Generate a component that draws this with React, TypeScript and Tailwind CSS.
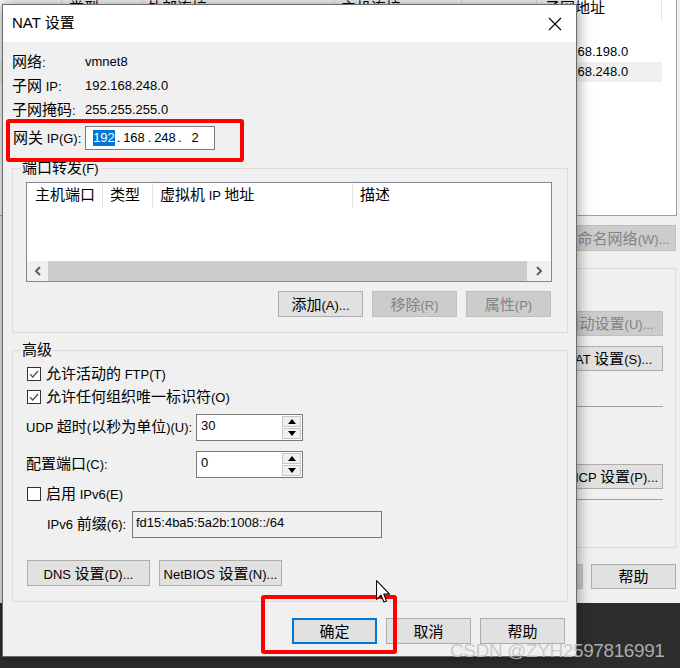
import clsx from "clsx";

const font = "font-['Liberation_Sans','Noto_Sans_CJK_SC',sans-serif]";
const cjk = /([\u2e80-\u9fff\uff00-\uffef]+)/;

// CJK runs are drawn a bit larger than the latin runs, like the Windows UI font does
function T({ s }: Readonly<{ s: string }>) {
  return (
    <span className="whitespace-pre">
      {s.split(cjk).map((p, i) =>
        i % 2 ? (
          <span key={i} className="text-[15px]">
            {p}
          </span>
        ) : (
          p
        ),
      )}
    </span>
  );
}

function Button({
  label,
  className,
  disabled,
  primary,
}: Readonly<{ label: string; className?: string; disabled?: boolean; primary?: boolean }>) {
  return (
    <button
      type="button"
      className={clsx(
        "flex shrink-0 items-center justify-center whitespace-nowrap leading-none",
        disabled
          ? "border border-[#bfbfbf] bg-[#cccccc] text-[#838383]"
          : primary
            ? "border-2 border-[#0078d7] bg-[#e1e1e1]"
            : "border border-[#adadad] bg-[#e1e1e1]",
        className ?? "h-[26px] w-[85px]",
      )}
    >
      <T s={label} />
    </button>
  );
}

function Check({ label, checked }: Readonly<{ label: string; checked?: boolean }>) {
  return (
    <div className="flex h-[20px] items-center">
      <div className="ml-px flex h-[14px] w-[14px] items-center justify-center border border-[#333333] bg-white">
        {checked ? (
          <svg width="12" height="12" viewBox="0 0 12 12">
            <path d="M2 6.2 L4.7 9 L10 3" fill="none" stroke="#4a4a4a" strokeWidth="1.2" />
          </svg>
        ) : null}
      </div>
      <span className="ml-[5px]">
        <T s={label} />
      </span>
    </div>
  );
}

function Tri({ down }: Readonly<{ down?: boolean }>) {
  return (
    <svg width="8" height="5" viewBox="0 0 8 5">
      <polygon points={down ? "0,0 8,0 4,5" : "0,5 8,5 4,0"} fill="#000" />
    </svg>
  );
}

function Spin({ value }: Readonly<{ value: string }>) {
  return (
    <div className="flex h-[27px] w-[107px] border border-[#7a7a7a] bg-white">
      <div className="flex-1 pl-[4px] pt-[3px] leading-[16px]">{value}</div>
      <div className="my-px mr-px flex w-[19px] flex-col gap-px">
        <div className="flex flex-1 items-center justify-center border border-[#c8c8c8] bg-[#f0f0f0]">
          <Tri />
        </div>
        <div className="flex flex-1 items-center justify-center border border-[#c8c8c8] bg-[#f0f0f0]">
          <Tri down />
        </div>
      </div>
    </div>
  );
}

function Chevron({ right }: Readonly<{ right?: boolean }>) {
  return (
    <svg width="8" height="10" viewBox="0 0 8 10">
      <path
        d={right ? "M2 1 L6 5 L2 9" : "M6 1 L2 5 L6 9"}
        fill="none"
        stroke="#606060"
        strokeWidth="2"
      />
    </svg>
  );
}

function BackWindow() {
  return (
    <div className="flex h-[603px] flex-col bg-[#f0f0f0]">
      <div className="h-[216px] w-[677px] shrink-0 border-r border-b border-[#a0a0a0] bg-white">
        <div className="flex h-[22px]">
          <div className="w-[62px] border-r border-[#e5e5e5]" />
          <div className="w-[81px] border-r border-[#e5e5e5] pl-[7px] leading-[16px]">
            <T s="类型" />
          </div>
          <div className="w-[192px] border-r border-[#e5e5e5] pl-[4px] leading-[16px]">
            <T s="外部连接" />
          </div>
          <div className="w-[127px] border-r border-[#e5e5e5] pl-[6px] leading-[16px]">
            <T s="主机连接" />
          </div>
          <div className="w-[75px] border-r border-[#e5e5e5]" />
          <div className="w-[125px] border-r border-[#e5e5e5] pl-[8px] leading-[16px]">
            <T s="子网地址" />
          </div>
        </div>
        <div className="h-[20px]" />
        <div className="flex h-[20px] items-center">
          <span className="ml-[545px]">192.168.198.0</span>
        </div>
        <div className="flex h-[20px] w-[662px] items-center bg-[#f0f0f0]">
          <span className="ml-[545px]">192.168.248.0</span>
        </div>
      </div>
      <Button label="重命名网络(W)..." disabled className="mr-[4px] mt-[9px] h-[26px] w-[120px] self-end" />
      <div className="mr-[4px] mt-[17px] flex h-[280px] w-[140px] flex-col items-end self-end border border-[#dcdcdc] pr-[12px]">
        <Button label="自动设置(U)..." disabled className="mt-[42px] h-[25px] w-[108px]" />
        <Button label="NAT 设置(S)..." className="mt-[10px] h-[25px] w-[108px]" />
        <div className="mt-[35px] w-[124px] border-t border-[#a0a0a0]" />
        <Button label="DHCP 设置(P)..." className="mt-[57px] h-[25px] w-[108px]" />
        <div className="mt-[10px] w-[124px] border-t border-[#a0a0a0]" />
      </div>
      <div className="mr-[4px] mt-[16px] flex justify-end gap-[8px]">
        <Button label="应用(A)" disabled className="h-[25px] w-[85px]" />
        <Button label="帮助" className="h-[25px] w-[85px]" />
      </div>
    </div>
  );
}

function Dialog() {
  return (
    <div className="absolute left-[2px] top-[4px] flex h-[653px] w-[575px] flex-col border border-[#6b6b6b] bg-[#f0f0f0] shadow-[0_0_14px_rgba(0,0,0,0.45)]">
      <div className="flex h-[37px] shrink-0 items-center justify-between bg-white pl-[9px] pr-[14px] text-[15px]">
        <span>NAT 设置</span>
        <svg width="14" height="14" viewBox="0 0 14 14">
          <path d="M1 1 L13 13 M13 1 L1 13" stroke="#000" strokeWidth="1.1" />
        </svg>
      </div>

      <div className="flex flex-1 flex-col pl-[9px]">
        <div className="mt-[8px] flex h-[24px] items-center">
          <span className="w-[73px]">
            <T s="网络:" />
          </span>
          <span>vmnet8</span>
        </div>
        <div className="flex h-[24px] items-center">
          <span className="w-[73px]">
            <T s="子网 IP:" />
          </span>
          <span>192.168.248.0</span>
        </div>
        <div className="flex h-[24px] items-center">
          <span className="w-[73px]">
            <T s="子网掩码:" />
          </span>
          <span>255.255.255.0</span>
        </div>
        <div className="mt-[4px] flex h-[24px] items-center">
          <span className="w-[73px] pl-px">
            <T s="网关 IP(G):" />
          </span>
          <div className="flex h-[24px] w-[130px] items-center border border-[#7a7a7a] bg-white pl-[7px] leading-[16px]">
            <span className="w-[22px] bg-[#0078d7] text-center text-white">192</span>
            <span className="w-[7px] text-center">.</span>
            <span className="w-[24px] text-center">168</span>
            <span className="w-[7px] text-center">.</span>
            <span className="w-[24px] text-center">248</span>
            <span className="w-[6px] text-center">.</span>
            <span className="w-[24px] text-center">2</span>
          </div>
        </div>

        <fieldset className="mt-[8px] w-[556px] border border-[#dcdcdc]">
          <legend className="ml-[8px] h-[20px] px-px leading-[20px]">
            <T s="端口转发(F)" />
          </legend>
          <div className="flex flex-col pb-[15px] pl-[13px] pt-[4px]">
            <div className="flex h-[100px] w-[526px] flex-col border border-[#828790] bg-white">
              <div className="flex h-[25px]">
                <div className="flex w-[76px] items-center border-r border-[#e5e5e5] pl-[8px]">
                  <T s="主机端口" />
                </div>
                <div className="flex w-[50px] items-center border-r border-[#e5e5e5] pl-[7px]">
                  <T s="类型" />
                </div>
                <div className="flex w-[200px] items-center border-r border-[#e5e5e5] pl-[7px]">
                  <T s="虚拟机 IP 地址" />
                </div>
                <div className="flex items-center pl-[7px]">
                  <T s="描述" />
                </div>
              </div>
              <div className="flex-1" />
              <div className="flex h-[20px]">
                <div className="flex w-[21px] items-center justify-center bg-[#f0f0f0]">
                  <Chevron />
                </div>
                <div className="flex-1 bg-[#cdcdcd]" />
                <div className="flex w-[24px] items-center justify-center bg-[#f0f0f0]">
                  <Chevron right />
                </div>
              </div>
            </div>
            <div className="mt-[9px] flex w-[525px] justify-end gap-[9px]">
              <Button label="添加(A)..." />
              <Button label="移除(R)" disabled />
              <Button label="属性(P)" disabled />
            </div>
          </div>
        </fieldset>

        <fieldset className="mt-[7px] w-[556px] border border-[#dcdcdc]">
          <legend className="ml-[8px] h-[20px] px-px leading-[20px]">
            <T s="高级" />
          </legend>
          <div className="flex flex-col pb-[15px] pl-[13px] pt-[4px]">
            <Check label="允许活动的 FTP(T)" checked />
            <div className="mt-[3px]">
              <Check label="允许任何组织唯一标识符(O)" checked />
            </div>
            <div className="mt-[7px] flex h-[27px] items-center">
              <span className="w-[170px]">
                <T s="UDP 超时(以秒为单位)(U):" />
              </span>
              <Spin value="30" />
            </div>
            <div className="mt-[10px] flex h-[27px] items-center">
              <span className="w-[170px]">
                <T s="配置端口(C):" />
              </span>
              <Spin value="0" />
            </div>
            <div className="mt-[6px]">
              <Check label="启用 IPv6(E)" />
            </div>
            <div className="mt-[7px] flex h-[27px] items-center pl-[21px]">
              <span className="w-[85px]">
                <T s="IPv6 前缀(6):" />
              </span>
              <div className="h-[27px] w-[250px] border border-[#7a7a7a] bg-[#f0f0f0] pl-[3px] pt-[3px] leading-[16px]">
                fd15:4ba5:5a2b:1008::/64
              </div>
            </div>
            <div className="ml-px mt-[22px] flex gap-[9px]">
              <Button label="DNS 设置(D)..." className="h-[26px] w-[123px]" />
              <Button label="NetBIOS 设置(N)..." className="h-[26px] w-[123px]" />
            </div>
          </div>
        </fieldset>

        <div className="mt-[16px] flex justify-end gap-[9px] pr-[11px]">
          <Button label="确定" primary />
          <Button label="取消" />
          <Button label="帮助" />
        </div>
      </div>
    </div>
  );
}

export default function App() {
  return (
    <div
      className={clsx(
        "relative h-[668px] w-[680px] overflow-hidden bg-[#2d2d2d] text-[13px] text-black",
        font,
      )}
    >
      <BackWindow />
      <Dialog />

      {/* annotation boxes drawn over the screenshot */}
      <div className="absolute left-[6px] top-[119px] h-[43px] w-[238px] rounded-[3px] border-4 border-[#ff0000]" />
      <div className="absolute left-[261px] top-[595px] h-[59px] w-[136px] rounded-[3px] border-4 border-[#ff0000]" />

      <svg className="absolute left-[376px] top-[580px]" width="14" height="23" viewBox="0 0 12 19.5">
        <path
          d="M0.5 0.5 L0.5 16.5 L4.3 12.8 L6.8 18.8 L9 17.9 L6.6 12 L11.6 12 Z"
          fill="#fff"
          stroke="#000"
          strokeWidth="0.9"
          strokeLinejoin="round"
        />
      </svg>

      <div className="absolute left-[450px] top-[641px] text-[19px] leading-[19px] tracking-[-0.4px] text-[rgba(196,196,196,0.85)] font-['Liberation_Sans',sans-serif]">
        CSDN @ZYH2597816991
      </div>
    </div>
  );
}
